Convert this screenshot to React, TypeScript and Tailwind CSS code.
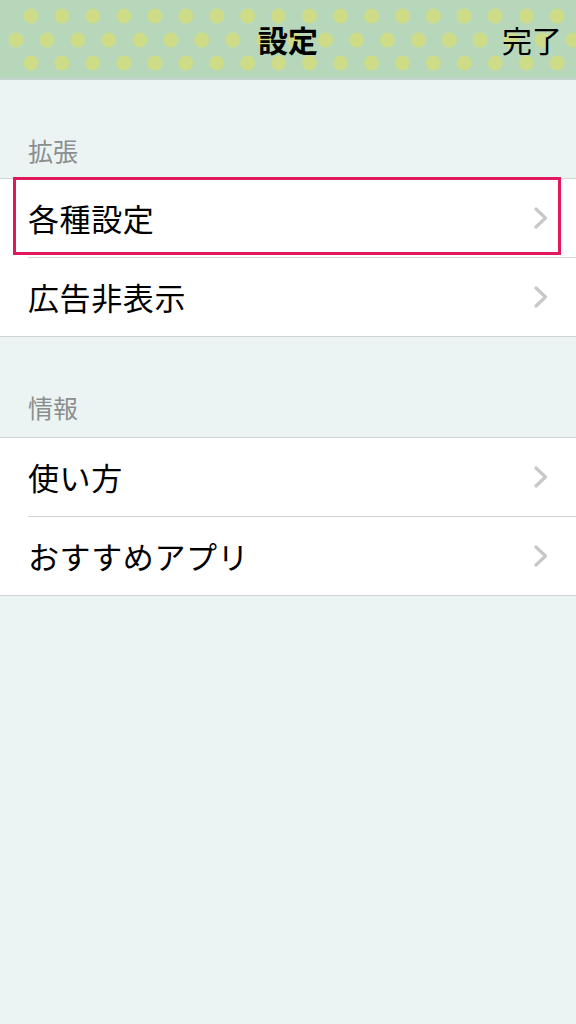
import React from "react";

const JP = { fontFamily: '"Noto Sans CJK JP", "Noto Sans", sans-serif' };

function Dots() {
  // staggered polka dots behind the nav bar
  const rows = [
    { y: 16, x0: 31, n: 18 },
    { y: 40, x0: 16, n: 19 },
    { y: 63, x0: 31, n: 18 },
  ];
  return (
    <svg className="absolute inset-0" width="576" height="78" aria-hidden>
      {rows.map((r) =>
        Array.from({ length: r.n }).map((_, i) => (
          <circle key={`${r.y}-${i}`} cx={r.x0 + i * 30.95} cy={r.y} r="7.5" fill="#cedc88" />
        )),
      )}
    </svg>
  );
}

function Chevron() {
  return (
    <svg width="16" height="24" viewBox="0 0 16 24" className="shrink-0">
      <path d="M3 3 L12.5 12 L3 21" fill="none" stroke="#c7c7cc" strokeWidth="3.2" strokeLinecap="round" strokeLinejoin="round" />
    </svg>
  );
}

function Row({ label, last, selected }: { label: string; last?: boolean; selected?: boolean }) {
  return (
    <div className="relative bg-white">
      <div className="h-[78px] flex items-center justify-between pl-[28px] pr-[27px]">
        <span className="text-[31px] text-black tracking-[0.6px]">{label}</span>
        <Chevron />
      </div>
      {!last && <div className="ml-[28px] h-px bg-[#d4d6d6]" />}
      {selected && (
        <div className="absolute left-[13px] right-[15px] top-[-2px] bottom-[3px] border-[3px] border-[#e2185f]" />
      )}
    </div>
  );
}

function Group({ items, selectedIndex }: { items: string[]; selectedIndex?: number }) {
  return (
    <div className="border-y border-[#cfd3d3]">
      {items.map((it, i) => (
        <Row key={it} label={it} last={i === items.length - 1} selected={i === selectedIndex} />
      ))}
    </div>
  );
}

export default function App() {
  return (
    <div className="w-[576px] h-[1024px] bg-[#ebf4f3] overflow-hidden" style={JP}>
      <header className="relative h-[80px] bg-[#b6d7b9] border-b-2 border-[#c6d3ce]">
        <Dots />
        <div className="relative h-full flex items-center justify-center">
          <h1 className="text-[30px] font-bold text-black leading-none">設定</h1>
          <span className="absolute right-[14px] text-[30px] text-black leading-none">完了</span>
        </div>
      </header>

      <div className="h-[98px] flex items-end pl-[28px] pb-[12px]">
        <span className="text-[25px] text-[#8b8e8e] leading-[32px]">拡張</span>
      </div>
      <Group items={["各種設定", "広告非表示"]} selectedIndex={0} />

      <div className="h-[100px] flex items-end pl-[28px] pb-[14px]">
        <span className="text-[25px] text-[#8b8e8e] leading-[32px]">情報</span>
      </div>
      <Group items={["使い方", "おすすめアプリ"]} />
    </div>
  );
}
